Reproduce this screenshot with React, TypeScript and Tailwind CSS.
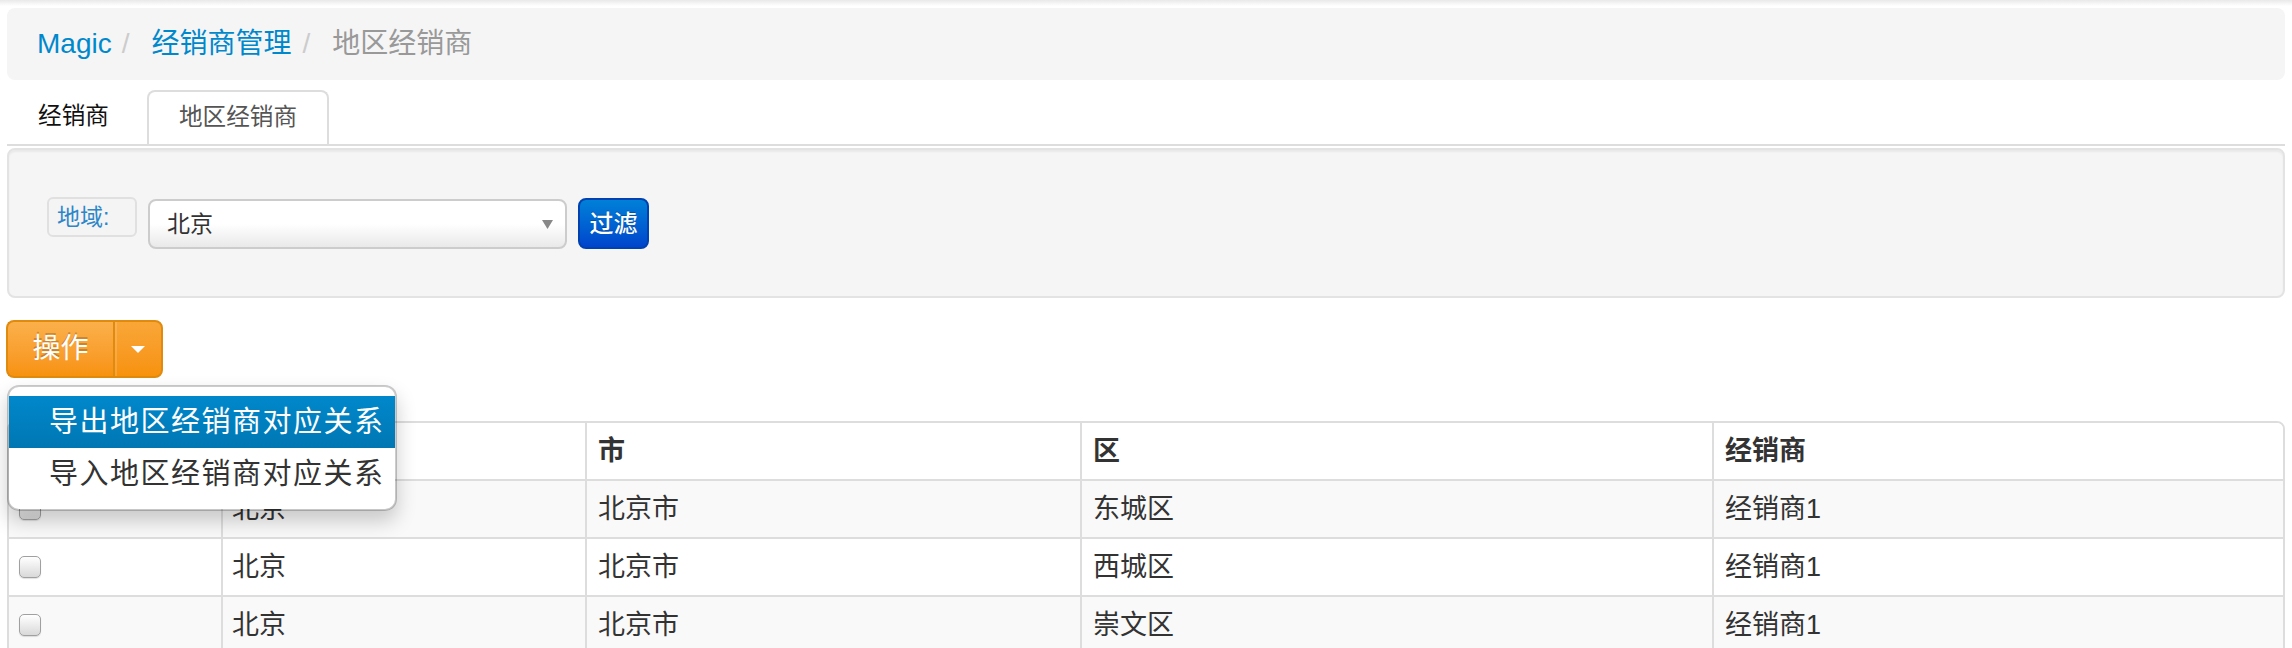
import React from "react";

const rows = [
    { province: "北京", city: "北京市", district: "东城区", dealer: "经销商1" },
    { province: "北京", city: "北京市", district: "西城区", dealer: "经销商1" },
    { province: "北京", city: "北京市", district: "崇文区", dealer: "经销商1" },
];

const gridCols = "grid grid-cols-[212px_364px_495px_632px_1fr]";

const Checkbox = () => (
    <span className="block w-[22px] h-[22px] rounded-[5px] border border-[#a0a0a0] bg-linear-to-b from-white to-[#d9d9d9] shadow-[0_1px_1px_rgba(0,0,0,0.12)]" />
);

const Breadcrumb = () => (
    <div className="mt-[2px] h-[72px] flex items-center px-[30px] rounded-[8px] bg-[#f5f5f5] text-[28px] leading-none">
        <span className="text-[#0088cc]">Magic</span>
        <span className="ml-[10px] mr-[22px] text-[#ccc]">/</span>
        <span className="text-[#0088cc]">经销商管理</span>
        <span className="ml-[11px] mr-[22px] text-[#ccc]">/</span>
        <span className="text-[#999]">地区经销商</span>
    </div>
);

const Tabs = () => (
    <div className="mt-[10px] flex items-end gap-[7px] border-b-2 border-[#ddd] text-[23.6px] leading-none">
        <div className="w-[133px] h-[54px] flex items-center justify-center text-[#111]">经销商</div>
        <div className="w-[182px] h-[54px] flex items-center justify-center text-[#555] bg-white border-2 border-b-0 border-[#ddd] rounded-t-[8px]">
            地区经销商
        </div>
    </div>
);

const Filter = () => (
    <div className="mt-[2px] h-[150px] flex items-start pt-[47px] pl-[38px] rounded-[8px] bg-[#f5f5f5] border-2 border-[#e3e3e3] shadow-[inset_0_2px_2px_rgba(0,0,0,0.05)]">
        <div className="w-[90px] h-[40px] flex items-center pl-[8px] rounded-[6px] border-2 border-[#e0e0e0] bg-[#f4f4f4] text-[23px] leading-none text-[#2d86c9]">
            地域:
        </div>
        <div className="ml-[11px] mt-[2px] w-[419px] h-[50px] flex items-center justify-between pl-[17px] pr-[12px] rounded-[8px] border-2 border-[#cccccc] bg-linear-to-b from-white via-white to-[#e9e9e9] text-[23px] leading-none text-[#333]">
            <span>北京</span>
            <svg width="11" height="9" viewBox="0 0 11 9">
                <polygon points="0,0 11,0 5.5,9" fill="#888" />
            </svg>
        </div>
        <div className="ml-[11px] mt-[1px] w-[71px] h-[51px] flex items-center justify-center rounded-[8px] border-2 border-[#0041b0] bg-linear-to-b from-[#0080d8] to-[#0044cc] text-[24px] leading-none text-white font-medium [text-shadow:0_-1px_0_rgba(0,0,0,0.25)]">
            过滤
        </div>
    </div>
);

const ActionMenu = () => (
    <div className="relative mt-[22px] h-[58px]">
        <div className="flex h-[58px] -ml-[1px] text-white">
            <div className="w-[107px] flex items-center justify-center rounded-l-[8px] border-2 border-r-0 border-[#e08a0e] bg-linear-to-b from-[#fbb04a] to-[#f7920a] text-[28px] leading-none [text-shadow:0_-2px_0_rgba(0,0,0,0.2)]">
                操作
            </div>
            <div className="w-[50px] flex items-center justify-center rounded-r-[8px] border-2 border-[#e08a0e] bg-linear-to-b from-[#f9a637] to-[#f7920a] shadow-[inset_2px_0_0_rgba(255,255,255,0.15)]">
                <svg width="14" height="7" viewBox="0 0 14 7">
                    <polygon points="0,0 14,0 7,7" fill="#fff" />
                </svg>
            </div>
        </div>
        <div className="absolute z-10 left-0 top-[65px] w-[390px] py-[9px] rounded-[12px] border-2 border-[rgba(0,0,0,0.2)] bg-white shadow-[0_10px_20px_rgba(0,0,0,0.2)] bg-clip-padding text-[29px] tracking-[1.5px] leading-none">
            <div className="h-[52px] flex items-center pl-[40px] text-white bg-linear-to-b from-[#0088cc] to-[#0077b3]">
                导出地区经销商对应关系
            </div>
            <div className="h-[52px] flex items-center pl-[40px] text-[#333]">
                导入地区经销商对应关系
            </div>
        </div>
    </div>
);

const DealerTable = () => (
    <div className="mt-[43px] border-2 border-[#ddd] rounded-[8px] overflow-hidden text-[27px] leading-none text-[#333]">
        <div className={`${gridCols} h-[56px] bg-white font-bold`}>
            <div className="flex items-center pl-[10px]"><Checkbox /></div>
            <div className="flex items-center pl-[10px] border-l-2 border-[#ddd]">省</div>
            <div className="flex items-center pl-[11px] border-l-2 border-[#ddd]">市</div>
            <div className="flex items-center pl-[11px] border-l-2 border-[#ddd]">区</div>
            <div className="flex items-center pl-[11px] border-l-2 border-[#ddd]">经销商</div>
        </div>
        {rows.map((r, i) => (
            <div key={i} className={`${gridCols} h-[58px] border-t-2 border-[#ddd] ${i % 2 === 0 ? "bg-[#f9f9f9]" : "bg-white"}`}>
                <div className="flex items-center pl-[10px]"><Checkbox /></div>
                <div className="flex items-center pl-[9px] border-l-2 border-[#ddd]">{r.province}</div>
                <div className="flex items-center pl-[11px] border-l-2 border-[#ddd]">{r.city}</div>
                <div className="flex items-center pl-[11px] border-l-2 border-[#ddd]">{r.district}</div>
                <div className="flex items-center pl-[11px] border-l-2 border-[#ddd]">{r.dealer}</div>
            </div>
        ))}
    </div>
);

export default function App() {
    return (
        <div className="relative h-[648px] overflow-hidden bg-white font-['Liberation_Sans','Noto_Sans_CJK_SC',sans-serif]">
            <div className="h-[6px] bg-linear-to-b from-[#e9e9e9] to-white" />
            <div className="px-[7px]">
                <Breadcrumb />
                <Tabs />
                <Filter />
                <ActionMenu />
                <DealerTable />
            </div>
        </div>
    );
}
